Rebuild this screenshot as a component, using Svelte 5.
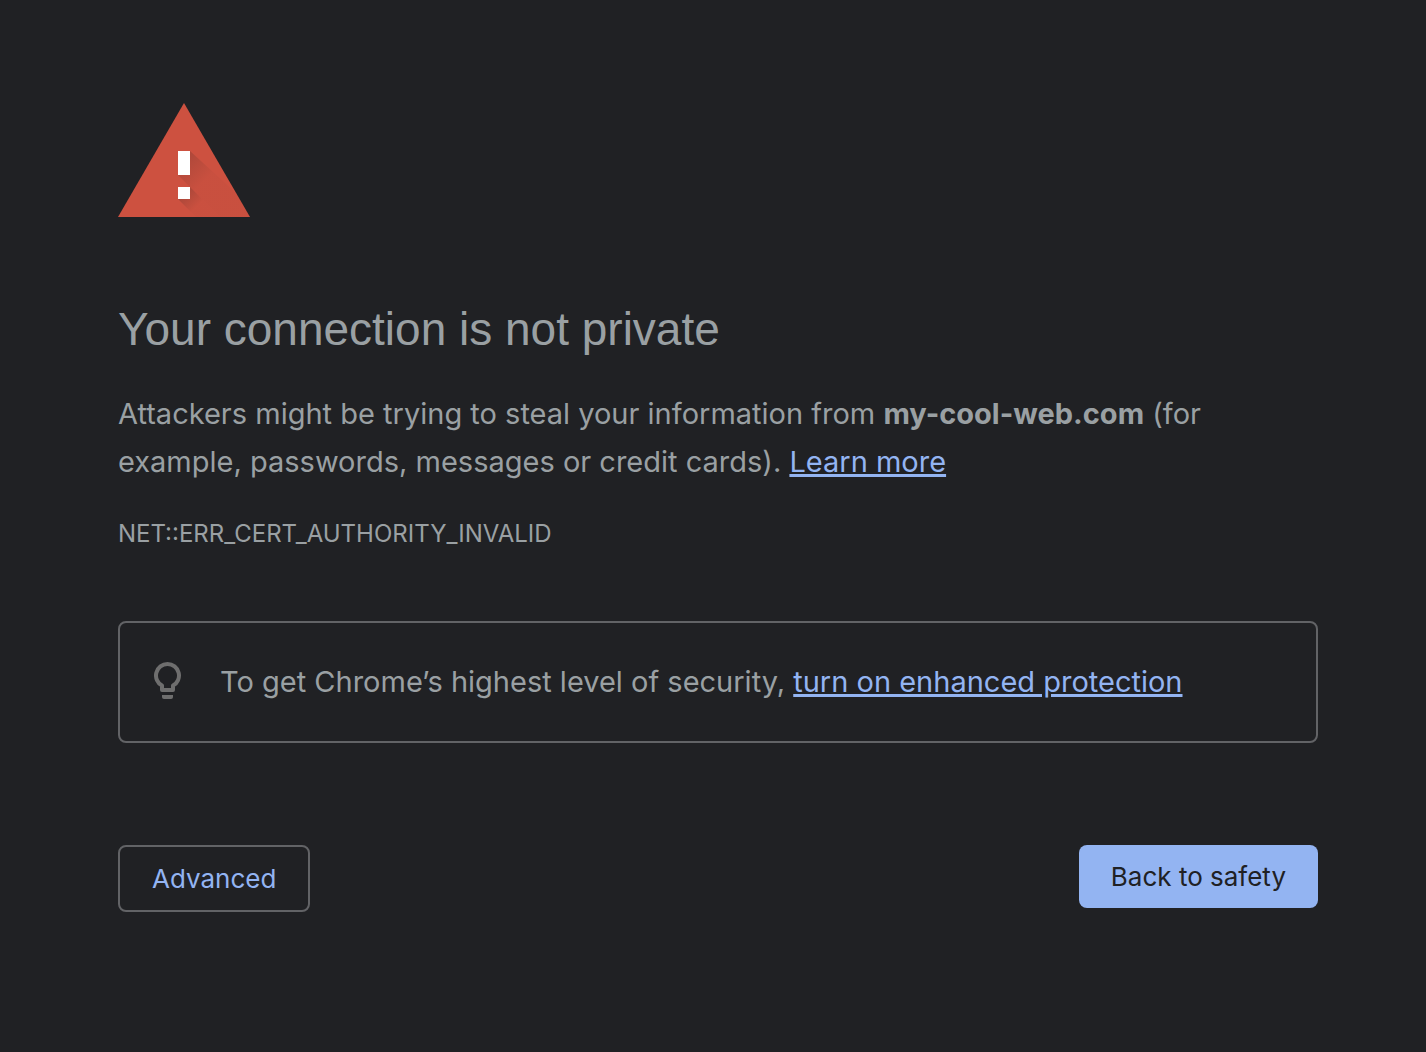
<script>
	let { domain = 'my-cool-web.com', errorCode = 'NET::ERR_CERT_AUTHORITY_INVALID' } = $props();
</script>

<main class="interstitial">
	<svg class="warning" viewBox="0 0 132 114" role="img" aria-label="Warning">
		<defs>
			<linearGradient id="shadow-top" x1="60" y1="60" x2="82" y2="82" gradientUnits="userSpaceOnUse">
				<stop offset="0" stop-color="#3e2723" stop-opacity="0.22" />
				<stop offset="1" stop-color="#3e2723" stop-opacity="0.03" />
			</linearGradient>
			<linearGradient id="shadow-bottom" x1="66" y1="90" x2="79" y2="103" gradientUnits="userSpaceOnUse">
				<stop offset="0" stop-color="#3e2723" stop-opacity="0.24" />
				<stop offset="1" stop-color="#3e2723" stop-opacity="0.02" />
			</linearGradient>
		</defs>
		<path fill="#cd5140" d="M66 0l66 114H0z" />
		<path fill="url(#shadow-top)" d="M72 48l46 42 14 24H102L60 72z" />
		<path fill="url(#shadow-bottom)" d="M72 84l30 30H78L60 96z" />
		<path fill="#fff" d="M60 48h12v24H60zM60 84h12v12H60z" />
	</svg>

	<h1>Your connection is not private</h1>

	<p>
		Attackers might be trying to steal your information from <strong>{domain}</strong> (for example,
		passwords, messages or credit cards). <a href="#learn-more">Learn more</a>
	</p>
	<p class="error-code">{errorCode}</p>

	<div class="promo">
		<svg class="bulb" viewBox="0 0 28 40" aria-hidden="true">
			<path
				fill="none"
				stroke="#6e6e6e"
				stroke-width="4"
				stroke-linejoin="round"
				d="M13.500 2a11.500 11.500 0 0 0-5.500 21.600V28h11v-4.400A11.500 11.500 0 0 0 13.500 2z"
			/>
			<path fill="#6e6e6e" d="M8 33h11v2q0 2-2 2h-7q-2 0-2-2z" />
		</svg>
		<p>To get Chrome’s highest level of security, <a href="#enhanced-protection">turn on enhanced protection</a></p>
	</div>

	<div class="actions">
		<button class="secondary" type="button">Advanced</button>
		<button class="primary" type="button">Back to safety</button>
	</div>
</main>

<style>
	:global(body) {
		margin: 0;
		background: #202124;
	}

	.interstitial {
		max-width: 1200px;
		margin: 0 auto;
		padding: 103px 108px 0 118px;
		color: #9aa0a3;
		font-family: Inter, 'Liberation Sans', sans-serif;
		font-size: 29px;
		line-height: 48px;
	}

	.warning {
		display: block;
		width: 132px;
		height: 114px;
	}

	h1 {
		margin: 83px 0 32px;
		font-family: 'Liberation Sans', Arial, sans-serif;
		font-size: 46px;
		font-weight: 400;
		line-height: 58px;
	}

	p {
		margin: 0;
	}

	a {
		color: #93b4f2;
		text-decoration-thickness: 3px;
	}

	.error-code {
		margin-top: 24px;
		font-size: 24px;
	}

	.promo {
		display: flex;
		align-items: center;
		gap: 38px;
		margin-top: 63px;
		padding: 35px 34px;
		border: 2px solid #626366;
		border-radius: 8px;
	}

	.bulb {
		flex: none;
		width: 28px;
		height: 40px;
	}

	.actions {
		display: flex;
		align-items: flex-start;
		justify-content: space-between;
		margin-top: 102px;
	}

	button {
		padding: 0 32px;
		border-radius: 8px;
		font: inherit;
		font-size: 26px;
		line-height: 63px;
	}

	.secondary {
		border: 2px solid #626366;
		background: transparent;
		color: #93b4f2;
	}

	.primary {
		border: 0;
		background: #93b4f2;
		color: #202124;
	}
</style>
